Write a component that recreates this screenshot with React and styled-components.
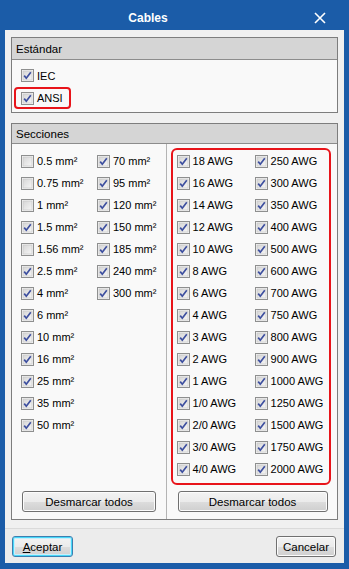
import React from 'react';
import styled, { createGlobalStyle } from 'styled-components';

const Global = createGlobalStyle`
  html, body {
    margin: 0;
    padding: 0;
    background: #1b5ca8;
  }
  body {
    font-family: "Liberation Sans", Arial, sans-serif;
    font-size: 11px;
    color: #000;
  }
`;

const Window = styled.div`
  width: 349px;
  height: 569px;
  box-sizing: border-box;
  display: flex;
  flex-direction: column;
  background: #1b5ca8;
  padding: 0 5px 6px 5px;
`;

const TitleBar = styled.div`
  height: 30px;
  box-sizing: border-box;
  padding-top: 6px;
  display: flex;
  align-items: center;
  margin: 0 -5px;
`;

const Title = styled.div`
  flex: 1;
  text-align: center;
  color: #fff;
  font-weight: bold;
  font-size: 12px;
`;

const Close = styled.div`
  width: 48px;
  margin-right: 5px;
  display: flex;
  align-items: center;
  justify-content: center;
`;

const Content = styled.div`
  flex: 1;
  display: flex;
  flex-direction: column;
  background: #f0f0f0;
  padding: 7px 6px 0 6px;
`;

const Group = styled.div`
  border: 1px solid #7d7d7d;
  background: #f9f9f9;
  display: flex;
  flex-direction: column;
  flex: ${p => (p.$grow ? 1 : 'none')};
  margin-bottom: ${p => p.$gap || 0}px;
`;

const GroupHeader = styled.div`
  height: ${p => p.$h}px;
  box-sizing: border-box;
  background: #d5d5d5;
  border-bottom: 1px solid #8c8c8c;
  padding-left: 4px;
  display: flex;
  align-items: center;
  font-size: 11.5px;
`;

const StandardBody = styled.div`
  padding: 4px 0 3px 2px;
  display: flex;
  flex-direction: column;
`;

const Row = styled.label`
  display: flex;
  align-items: center;
  gap: 3px;
  height: ${p => p.$h || 22}px;
  white-space: nowrap;
  padding-left: ${p => p.$indent || 0}px;
`;

const Highlight = styled.div`
  align-self: flex-start;
  border: 2px solid #e8141a;
  border-radius: 4px;
  height: 22px;
  box-sizing: border-box;
  display: flex;
  align-items: center;
  padding: 0 6px 0 5px;
`;

const SectionBody = styled.div`
  flex: 1;
  display: flex;
`;

const Column = styled.div`
  display: flex;
  flex-direction: column;
  padding: ${p => p.$pt}px 0 7px 0;
  width: ${p => p.$w}px;
  box-sizing: border-box;
  border-right: ${p => (p.$divider ? '1px solid #b4b4b4' : 'none')};
`;

const Grid = styled.div`
  display: grid;
  grid-auto-flow: column;
  grid-template-rows: repeat(${p => p.$rows}, 22px);
  grid-template-columns: ${p => p.$cols};
  padding-left: ${p => p.$pl}px;
`;

const RedBox = styled.div`
  margin: 4px 6px 0 4px;
  border: 2px solid #e8141a;
  border-radius: 6px;
  padding: 0 0 3px 4px;
`;

const Button = styled.button`
  font-family: "Liberation Sans", Arial, sans-serif;
  font-size: 11.5px;
  color: #000;
  height: 21px;
  padding: 0;
  border: 1px solid #707070;
  border-radius: 3px;
  background: linear-gradient(#f3f3f3 0%, #ebebeb 50%, #dddddd 51%, #cfcfcf 100%);
  box-shadow: inset 0 0 0 1px #fcfcfc;
  width: ${p => p.$w}px;
  margin: ${p => p.$m || 0};
  flex: none;
`;

const DefaultButton = styled(Button)`
  border-color: #3c7fb1;
  box-shadow: inset 0 0 0 1px #48d8f8, inset 0 0 0 2px #c8eefc;
`;

const Footer = styled.div`
  height: 35px;
  box-sizing: border-box;
  margin: 8px -6px 0 -6px;
  border-top: 1px solid #dadada;
  background: #ececec;
  display: flex;
  align-items: flex-start;
  justify-content: space-between;
  padding: 7px 8px 0 7px;
`;

const Box = ({ checked }) => (
  <svg width="13" height="13" viewBox="0 0 13 13" style={{ flex: 'none' }}>
    <defs>
      <linearGradient id="cbg" x1="0" y1="0" x2="1" y2="1">
        <stop offset="0" stopColor="#d6d6d6" />
        <stop offset="1" stopColor="#f6f6f6" />
      </linearGradient>
    </defs>
    <rect x="0.5" y="0.5" width="12" height="12" fill="#f4f4f4" stroke="#8e8f8f" />
    <rect x="2" y="2" width="9" height="9" fill="url(#cbg)" stroke="#c4c4c4" strokeWidth="0.6" />
    {checked && (
      <path d="M3.2 6.6 L5.3 9.2 L9.8 3.2" fill="none" stroke="#3d4f9f" strokeWidth="1.7" />
    )}
  </svg>
);

const Check = ({ label, checked = true, h }) => (
  <Row $h={h}>
    <Box checked={checked} />
    <span>{label}</span>
  </Row>
);

const leftItems = [
  ['0.5', false], ['0.75', false], ['1', false], ['1.5', true], ['1.56', false],
  ['2.5', true], ['4', true], ['6', true], ['10', true], ['16', true], ['25', true],
  ['35', true], ['50', true], ['70', true], ['95', true], ['120', true], ['150', true],
  ['185', true], ['240', true], ['300', true],
];

const awg = [
  '18', '16', '14', '12', '10', '8', '6', '4', '3', '2', '1', '1/0', '2/0', '3/0', '4/0',
  '250', '300', '350', '400', '500', '600', '700', '750', '800', '900', '1000', '1250',
  '1500', '1750', '2000',
];

export default function App() {
  return (
    <>
      <Global />
      <Window>
        <TitleBar>
          <Title>Cables</Title>
          <Close>
            <svg width="12" height="12" viewBox="0 0 12 12">
              <path d="M1 1 L11 11 M11 1 L1 11" stroke="#fff" strokeWidth="1.6" />
            </svg>
          </Close>
        </TitleBar>
        <Content>
          <Group $gap={10}>
            <GroupHeader $h={22}>Estándar</GroupHeader>
            <StandardBody>
              <Row $h={23} $indent={7}>
                <Box checked />
                <span>IEC</span>
              </Row>
              <Highlight>
                <Row $h={18}>
                  <Box checked />
                  <span>ANSI</span>
                </Row>
              </Highlight>
            </StandardBody>
          </Group>
          <Group $grow>
            <GroupHeader $h={20}>Secciones</GroupHeader>
            <SectionBody>
              <Column $pt={6} $w={155} $divider>
                <Grid $rows={13} $cols="76px 1fr" $pl={9}>
                  {leftItems.map(([v, c]) => (
                    <Check key={v} label={`${v} mm²`} checked={c} />
                  ))}
                </Grid>
                <Button $w={134} $m="auto 0 0 10px">Desmarcar todos</Button>
              </Column>
              <Column $pt={0} $w={171}>
                <RedBox>
                  <Grid $rows={15} $cols="78px 1fr" $pl={0}>
                    {awg.map(v => (
                      <Check key={v} label={`${v} AWG`} />
                    ))}
                  </Grid>
                </RedBox>
                <Button $w={150} $m="auto 0 0 11px">Desmarcar todos</Button>
              </Column>
            </SectionBody>
          </Group>
          <Footer>
            <DefaultButton $w={61}>
              <u>A</u>ceptar
            </DefaultButton>
            <Button $w={60}>Cancelar</Button>
          </Footer>
        </Content>
      </Window>
    </>
  );
}
